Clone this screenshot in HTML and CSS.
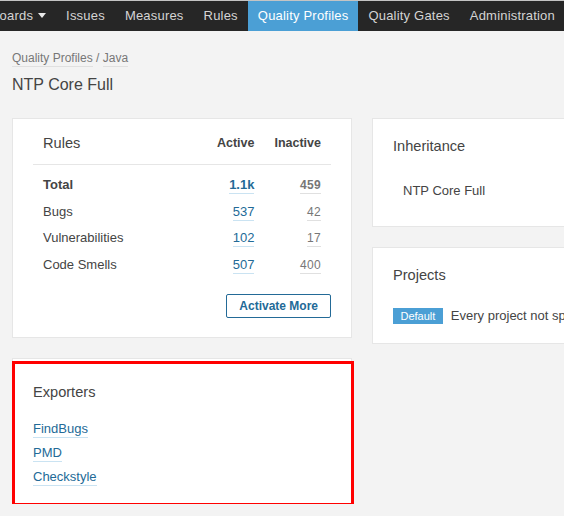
FILE: index.html
```html
<!DOCTYPE html>
<html lang="en">
<head>
<meta charset="utf-8">
<title>NTP Core Full - Quality Profiles</title>
<link rel="stylesheet" href="styles.css">
</head>
<body>
<nav class="navbar">
  <ul class="nav">
    <li><a class="nav-link" href="#">Dashboards<span class="caret"></span></a></li>
    <li><a class="nav-link" href="#">Issues</a></li>
    <li><a class="nav-link" href="#">Measures</a></li>
    <li><a class="nav-link" href="#">Rules</a></li>
    <li><a class="nav-link active" href="#">Quality Profiles</a></li>
    <li><a class="nav-link" href="#">Quality Gates</a></li>
    <li><a class="nav-link" href="#">Administration</a></li>
  </ul>
</nav>
<main class="page">
  <div class="breadcrumb"><a class="crumb" href="#">Quality Profiles</a> / <a class="crumb" href="#">Java</a></div>
  <h1 class="page-title">NTP Core Full</h1>
  <div class="columns">
    <div class="column">
      <section class="card rules-card">
        <div class="rules-grid">
          <div class="head-cell col-name"><h2 class="card-title">Rules</h2></div>
          <div class="head-cell col-active col-label">Active</div>
          <div class="head-cell col-inactive col-label">Inactive</div>

          <div class="row-cell col-name strong">Total</div>
          <div class="row-cell col-active"><a class="num active-num strong" href="#">1.1k</a></div>
          <div class="row-cell col-inactive"><a class="num inactive-num strong" href="#">459</a></div>

          <div class="row-cell col-name">Bugs</div>
          <div class="row-cell col-active"><a class="num active-num" href="#">537</a></div>
          <div class="row-cell col-inactive"><a class="num inactive-num" href="#">42</a></div>

          <div class="row-cell col-name">Vulnerabilities</div>
          <div class="row-cell col-active"><a class="num active-num" href="#">102</a></div>
          <div class="row-cell col-inactive"><a class="num inactive-num" href="#">17</a></div>

          <div class="row-cell col-name">Code Smells</div>
          <div class="row-cell col-active"><a class="num active-num" href="#">507</a></div>
          <div class="row-cell col-inactive"><a class="num inactive-num" href="#">400</a></div>
        </div>
        <div class="actions">
          <button class="btn" type="button">Activate More</button>
        </div>
      </section>

      <section class="card exporters-card highlighted">
        <h2 class="card-title">Exporters</h2>
        <ul class="export-list">
          <li><a class="export-link" href="#">FindBugs</a></li>
          <li><a class="export-link" href="#">PMD</a></li>
          <li><a class="export-link" href="#">Checkstyle</a></li>
        </ul>
      </section>
    </div>

    <div class="column">
      <section class="card inheritance-card">
        <h2 class="card-title">Inheritance</h2>
        <div class="inherit-item">NTP Core Full</div>
      </section>
      <section class="card projects-card">
        <h2 class="card-title">Projects</h2>
        <div class="project-row">
          <span class="badge">Default</span>
          <span class="project-text">Every project not specifying a quality profile will be associated to this quality profile.</span>
        </div>
      </section>
    </div>
  </div>
</main>
</body>
</html>
```

FILE: styles.css
```css
html, body {
  margin: 0;
  padding: 0;
  overflow: hidden;
  background: #f3f3f3;
  font-family: "Liberation Sans", Arial, sans-serif;
  color: #444;
}

/* ---------- Top navigation ---------- */
.navbar {
  border-top: 1px solid #c4c4c4;
  background: #262626;
  height: 30px;
  overflow: hidden;
}

.nav {
  display: flex;
  margin: 0 0 0 -49px;
  padding: 0;
  list-style: none;
  white-space: nowrap;
}

.nav-link {
  display: block;
  padding: 0 10px;
  line-height: 30px;
  font-size: 13px;
  letter-spacing: 0.2px;
  color: #d4d4d4;
  text-decoration: none;
}

.nav-link.active {
  background: #4b9fd5;
  color: #fff;
}

.caret {
  display: inline-block;
  margin-left: 5px;
  border-left: 4px solid transparent;
  border-right: 4px solid transparent;
  border-top: 5px solid #e8e8e8;
  vertical-align: 2px;
}

/* ---------- Page ---------- */
.page {
  padding: 18px 12px 0;
}

.breadcrumb {
  font-size: 12px;
  line-height: 18px;
  color: #777;
}

.crumb {
  color: #777;
  text-decoration: none;
  border-bottom: 1px solid #e0e0e0;
  padding-bottom: 1px;
}

.page-title {
  margin: 7px 0 0;
  font-size: 16px;
  line-height: 22px;
  font-weight: normal;
  color: #444;
}

.columns {
  display: grid;
  grid-template-columns: 340px 340px;
  gap: 20px;
  margin-top: 22px;
  align-items: start;
}

.column {
  display: flex;
  flex-direction: column;
  gap: 20px;
}

.card {
  background: #fff;
  border: 1px solid #e6e6e6;
}

.card-title {
  margin: 0;
  font-size: 14.6px;
  line-height: 20px;
  font-weight: normal;
  color: #444;
}

/* ---------- Rules card ---------- */
.rules-card {
  padding: 14px 20px 19px;
}

.rules-grid {
  display: grid;
  grid-template-columns: 1fr auto auto;
  align-items: start;
}

.head-cell {
  line-height: 20px;
  padding-bottom: 11px;
  margin-bottom: 7px;
  border-bottom: 1px solid #e6e6e6;
}

.col-name {
  padding-left: 10px;
}

.col-label {
  font-size: 12.5px;
  font-weight: bold;
  color: #444;
}

.row-cell {
  font-size: 13px;
  line-height: 26.5px;
  color: #444;
}

.strong {
  font-weight: bold;
}

.col-active {
  text-align: right;
}

.col-inactive {
  text-align: right;
  padding-left: 20px;
  padding-right: 10px;
}

.num {
  text-decoration: none;
  padding-bottom: 1px;
}

.active-num {
  color: #236a97;
  border-bottom: 1px solid #cae3f2;
}

.inactive-num {
  color: #777;
  font-size: 12px;
  letter-spacing: 0.3px;
  border-bottom: 1px solid #e0e0e0;
}

.actions {
  margin-top: 16px;
  display: flex;
  justify-content: flex-end;
}

.btn {
  height: 24px;
  padding: 0 12px;
  background: #fff;
  border: 1px solid #236a97;
  border-radius: 2px;
  color: #236a97;
  font-family: "Liberation Sans", Arial, sans-serif;
  font-size: 12px;
  font-weight: bold;
  line-height: 22px;
}

/* ---------- Exporters card ---------- */
.exporters-card {
  padding: 23px 20px 14px;
}

.highlighted {
  position: relative;
}

.highlighted::after {
  content: "";
  position: absolute;
  top: 2px;
  left: -1px;
  width: 342px;
  height: 145px;
  border: 3px solid #ff0000;
  box-sizing: border-box;
}

.export-list {
  list-style: none;
  margin: 15px 0 0;
  padding: 0;
}

.export-list li {
  font-size: 13px;
  line-height: 24px;
}

.export-link {
  color: #236a97;
  text-decoration: none;
  border-bottom: 1px solid #cae3f2;
  padding-bottom: 1px;
}

/* ---------- Right column ---------- */
.inheritance-card {
  padding: 17px 20px 25px;
}

.inherit-item {
  margin-top: 25px;
  padding-left: 10px;
  font-size: 13px;
  line-height: 20px;
  color: #444;
}

.projects-card {
  padding: 17px 20px 17px;
  overflow: hidden;
}

.project-row {
  margin-top: 21px;
  display: flex;
  align-items: center;
  gap: 8px;
  height: 20px;
  white-space: nowrap;
}

.badge {
  background: #4b9fd5;
  color: #fff;
  font-size: 11px;
  line-height: 16px;
  padding: 0 7.5px;
}

.project-text {
  font-size: 13px;
  line-height: 20px;
  color: #444;
}
```
